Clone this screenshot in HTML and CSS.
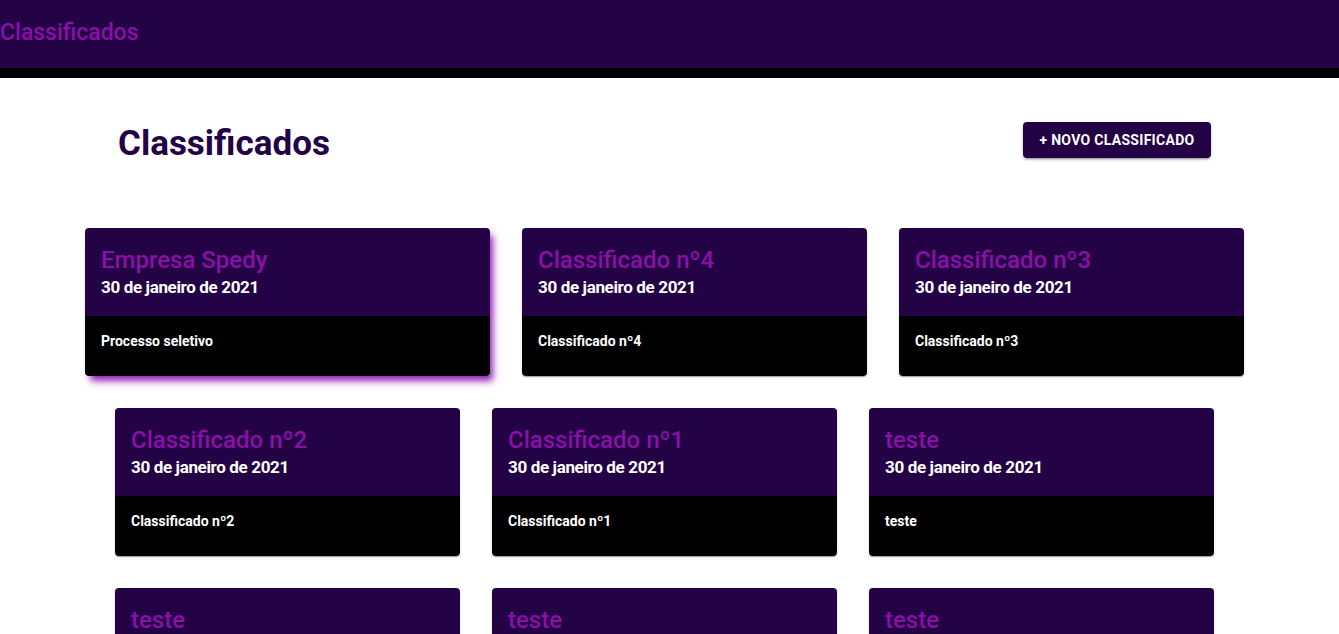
FILE: index.html
```html
<!DOCTYPE html>
<html lang="pt-BR">
<head>
<meta charset="utf-8">
<title>Classificados</title>
<link rel="stylesheet" href="styles.css">
</head>
<body>
<header class="topbar">
  <span class="brand">Classificados</span>
</header>
<main class="page">
  <div class="page-head">
    <h1 class="page-title">Classificados</h1>
    <button class="btn-new">+ Novo classificado</button>
  </div>
  <div class="cards">
    <article class="card card-active">
      <div class="card-top">
        <h2 class="card-title">Empresa Spedy</h2>
        <div class="card-date">30 de janeiro de 2021</div>
      </div>
      <div class="card-body">Processo seletivo</div>
    </article>
    <article class="card">
      <div class="card-top">
        <h2 class="card-title">Classificado nº4</h2>
        <div class="card-date">30 de janeiro de 2021</div>
      </div>
      <div class="card-body">Classificado nº4</div>
    </article>
    <article class="card">
      <div class="card-top">
        <h2 class="card-title">Classificado nº3</h2>
        <div class="card-date">30 de janeiro de 2021</div>
      </div>
      <div class="card-body">Classificado nº3</div>
    </article>
    <article class="card">
      <div class="card-top">
        <h2 class="card-title">Classificado nº2</h2>
        <div class="card-date">30 de janeiro de 2021</div>
      </div>
      <div class="card-body">Classificado nº2</div>
    </article>
    <article class="card">
      <div class="card-top">
        <h2 class="card-title">Classificado nº1</h2>
        <div class="card-date">30 de janeiro de 2021</div>
      </div>
      <div class="card-body">Classificado nº1</div>
    </article>
    <article class="card">
      <div class="card-top">
        <h2 class="card-title">teste</h2>
        <div class="card-date">30 de janeiro de 2021</div>
      </div>
      <div class="card-body">teste</div>
    </article>
    <article class="card">
      <div class="card-top">
        <h2 class="card-title">teste</h2>
        <div class="card-date">30 de janeiro de 2021</div>
      </div>
      <div class="card-body">teste</div>
    </article>
    <article class="card">
      <div class="card-top">
        <h2 class="card-title">teste</h2>
        <div class="card-date">30 de janeiro de 2021</div>
      </div>
      <div class="card-body">teste</div>
    </article>
    <article class="card">
      <div class="card-top">
        <h2 class="card-title">teste</h2>
        <div class="card-date">30 de janeiro de 2021</div>
      </div>
      <div class="card-body">teste</div>
    </article>
  </div>
</main>
</body>
</html>
```

FILE: styles.css
```css
* { box-sizing: border-box; }

html, body {
  margin: 0;
  padding: 0;
  background: #ffffff;
  font-family: Roboto, "Liberation Sans", Arial, sans-serif;
  overflow: hidden;
}

.topbar {
  height: 78px;
  background: #230346;
  border-bottom: 10px solid #000000;
  display: flex;
  align-items: center;
  padding-bottom: 4px;
}

.brand {
  color: #8a10a8;
  font-size: 23px;
  font-weight: 500;
  line-height: 1;
}

.page {
  width: 1329px;
}

.page-head {
  display: flex;
  justify-content: space-between;
  align-items: center;
  padding: 44px 118px 0 118px;
  height: 80px;
}

.page-title {
  margin: 0;
  padding-top: 6px;
  font-size: 35px;
  font-weight: 700;
  color: #230346;
  line-height: 1;
}

.btn-new {
  height: 36px;
  width: 188px;
  border: none;
  border-radius: 4px;
  background: #230346;
  color: #ffffff;
  font-family: inherit;
  font-size: 14px;
  font-weight: 700;
  text-transform: uppercase;
  letter-spacing: 0.3px;
  box-shadow: 0 3px 1px -2px rgba(0,0,0,0.2), 0 2px 2px 0 rgba(0,0,0,0.14), 0 1px 5px 0 rgba(0,0,0,0.12);
}

.cards {
  margin-top: 70px;
  display: flex;
  flex-wrap: wrap;
  justify-content: center;
  gap: 32px;
}

.card {
  width: 345px;
  border-radius: 4px;
  overflow: hidden;
  box-shadow: 0 2px 1px -1px rgba(0,0,0,0.2), 0 1px 1px 0 rgba(0,0,0,0.14), 0 1px 3px 0 rgba(0,0,0,0.12);
}

.card-active {
  width: 405px;
  overflow: visible;
  box-shadow: 4px 6px 7px -1px rgba(142, 20, 175, 0.95);
}

.card-active .card-top { border-radius: 4px 4px 0 0; }
.card-active .card-body { border-radius: 0 0 4px 4px; }

.card-top {
  background: #230346;
  height: 88px;
  padding: 16px 16px 0 16px;
}

.card-title {
  margin: 0;
  font-size: 24px;
  font-weight: 500;
  line-height: 32px;
  color: #8a10a8;
}

.card-date {
  font-size: 17px;
  font-weight: 700;
  line-height: 22px;
  letter-spacing: -0.35px;
  color: #ffffff;
}

.card-body {
  background: #000000;
  height: 60px;
  padding: 15px 16px 0 16px;
  font-size: 14px;
  font-weight: 700;
  line-height: 20px;
  color: #ffffff;
}
```
